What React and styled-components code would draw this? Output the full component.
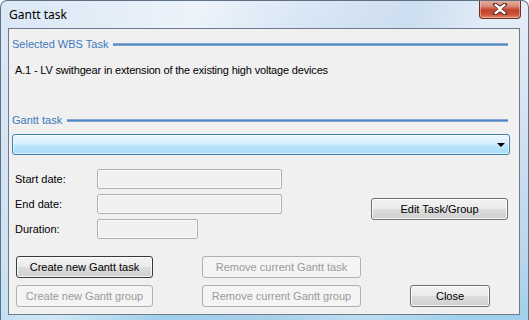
import styled, { createGlobalStyle } from "styled-components";

const Global = createGlobalStyle`
  html, body {
    margin: 0;
    padding: 0;
    background: #ffffff;
    overflow: hidden;
  }
`;

const Frame = styled.div`
  width: 529px;
  height: 320px;
  box-sizing: border-box;
  display: flex;
  flex-direction: column;
  border: 1px solid #5e7084;
  border-bottom: none;
  border-radius: 7px 7px 0 0;
  background:
    linear-gradient(115deg, rgba(255,255,255,0) 0%, rgba(255,255,255,0.5) 30%, rgba(255,255,255,0) 45%, rgba(180,205,230,0.35) 62%, rgba(255,255,255,0.3) 75%, rgba(255,255,255,0) 90%),
    linear-gradient(180deg, #dbe8f6 0%, #cfe0f2 40%, #b9d6ee 80%, #9fd0ec 100%);
  overflow: hidden;
  font-family: "Liberation Sans", Arial, sans-serif;
`;

const TitleBar = styled.div`
  height: 27px;
  display: flex;
  align-items: flex-start;
  justify-content: space-between;
  padding-left: 8px;
`;

const Title = styled.span`
  font-family: "Noto Sans", "Open Sans", sans-serif;
  font-size: 12px;
  line-height: 16px;
  margin-top: 6px;
  color: #000;
`;

const CloseBtn = styled.div`
  width: 42px;
  height: 19px;
  margin-right: 7px;
  margin-top: -1px;
  box-sizing: border-box;
  border: 1px solid #6b2f27;
  border-top: none;
  border-radius: 0 0 4px 4px;
  background: linear-gradient(180deg, #e9b3a6 0%, #d88a78 35%, #c2432b 55%, #cc5237 80%, #de8a6c 100%);
  box-shadow: inset 0 0 0 1px rgba(255, 220, 210, 0.45);
  display: flex;
  align-items: center;
  justify-content: center;
`;

const Client = styled.div`
  flex: 1;
  margin: 0 8px 5px 7px;
  border: 1px solid #6d7b8b;
  background: #f0f0f0;
  display: flex;
  flex-direction: column;
  padding: 0 8px 0 3px;
`;

const GroupHeader = styled.div`
  display: flex;
  align-items: center;
  height: 14px;
  margin-top: ${(p) => p.$top}px;
  margin-right: 3px;
  color: #3b79bd;
  font-size: 11px;
  line-height: 14px;
`;

const Rule = styled.div`
  flex: 1;
  height: 3px;
  margin-left: 5px;
  margin-top: 1px;
  box-sizing: border-box;
  background: linear-gradient(180deg, #a8c4e2 0%, #4f86c3 40%, #4f86c3 70%, #b8d0ea 100%);
`;

const Description = styled.div`
  margin: 13px 0 0 3px;
  font-size: 11px;
  line-height: 13px;
  letter-spacing: -0.17px;
  color: #000;
`;

const Combo = styled.div`
  margin-top: 7px;
  margin-right: 1px;
  height: 21px;
  box-sizing: border-box;
  border: 1px solid #3c7fb1;
  border-radius: 3px;
  background: linear-gradient(180deg, #eaf6fd 0%, #d9f0fc 45%, #bee6fd 55%, #a7d9f5 100%);
  box-shadow: inset 0 0 0 1px rgba(255, 255, 255, 0.6);
  display: flex;
  align-items: center;
  justify-content: flex-end;
  padding-right: 4px;
`;

const Arrow = styled.div`
  width: 0;
  height: 0;
  border-left: 4px solid transparent;
  border-right: 4px solid transparent;
  border-top: 4px solid #000;
  margin-top: 1px;
`;

const FormArea = styled.div`
  display: flex;
  margin-top: 14px;
  padding-left: 3px;
  margin-right: 3px;
`;

const Fields = styled.div`
  display: grid;
  grid-template-columns: 82px auto;
  row-gap: 5px;
  align-items: center;
`;

const Label = styled.span`
  font-size: 11px;
  line-height: 13px;
  color: #000;
`;

const Input = styled.div`
  width: ${(p) => p.$w}px;
  height: 20px;
  box-sizing: border-box;
  border: 1px solid #b0b0b0;
  border-radius: 2px;
  background: #f0f0f0;
  box-shadow: inset 0 0 0 1px #f8f8f8;
`;

const Button = styled.div`
  width: ${(p) => p.$w}px;
  height: 22px;
  box-sizing: border-box;
  border: 1px solid ${(p) => (p.$disabled ? "#adb2b5" : p.$default ? "#3a3a3a" : "#707070")};
  border-radius: 3px;
  background: ${(p) =>
    p.$disabled
      ? "#f4f4f4"
      : "linear-gradient(180deg, #f2f2f2 0%, #ebebeb 48%, #dddddd 52%, #cfcfcf 100%)"};
  box-shadow: inset 0 0 0 1px ${(p) => (p.$disabled ? "#f4f4f4" : "rgba(255,255,255,0.8)")};
  color: ${(p) => (p.$disabled ? "#9a9a9a" : "#000")};
  font-size: 11px;
  line-height: 20px;
  text-align: center;
  white-space: nowrap;
`;

const EditButton = styled(Button)`
  margin-left: auto;
  margin-top: 29px;
`;

const ButtonGrid = styled.div`
  display: grid;
  grid-template-columns: 137px 159px 80px;
  column-gap: 49px;
  row-gap: 7px;
  margin-top: 17px;
  padding-left: 4px;
`;

const Empty = styled.div``;

export default function App() {
  return (
    <>
      <Global />
      <Frame>
        <TitleBar>
          <Title>Gantt task</Title>
          <CloseBtn>
            <svg width="16" height="12" viewBox="0 0 16 12">
              <path
                d="M3 1.5 L8 5 L13 1.5 M3 10.5 L8 7 L13 10.5"
                stroke="#5a2a22"
                strokeWidth="4"
                fill="none"
                strokeLinecap="round"
              />
              <path
                d="M3.5 2 L8 5.2 L12.5 2 M3.5 10 L8 6.8 L12.5 10 M6 4 L10 8 M10 4 L6 8"
                stroke="#ffffff"
                strokeWidth="2.2"
                fill="none"
                strokeLinecap="round"
              />
            </svg>
          </CloseBtn>
        </TitleBar>
        <Client>
          <GroupHeader $top={8}>
            <span>Selected WBS Task</span>
            <Rule />
          </GroupHeader>
          <Description>
            A.1 - LV swithgear in extension of the existing high voltage devices
          </Description>
          <GroupHeader $top={36}>
            <span>Gantt task</span>
            <Rule />
          </GroupHeader>
          <Combo>
            <Arrow />
          </Combo>
          <FormArea>
            <Fields>
              <Label>Start date:</Label>
              <Input $w={185} />
              <Label>End date:</Label>
              <Input $w={185} />
              <Label>Duration:</Label>
              <Input $w={101} />
            </Fields>
            <EditButton $w={137}>Edit Task/Group</EditButton>
          </FormArea>
          <ButtonGrid>
            <Button $w={137} $default>
              Create new Gantt task
            </Button>
            <Button $w={159} $disabled>
              Remove current Gantt task
            </Button>
            <Empty />
            <Button $w={137} $disabled>
              Create new Gantt group
            </Button>
            <Button $w={159} $disabled>
              Remove current Gantt group
            </Button>
            <Button $w={80}>Close</Button>
          </ButtonGrid>
        </Client>
      </Frame>
    </>
  );
}
